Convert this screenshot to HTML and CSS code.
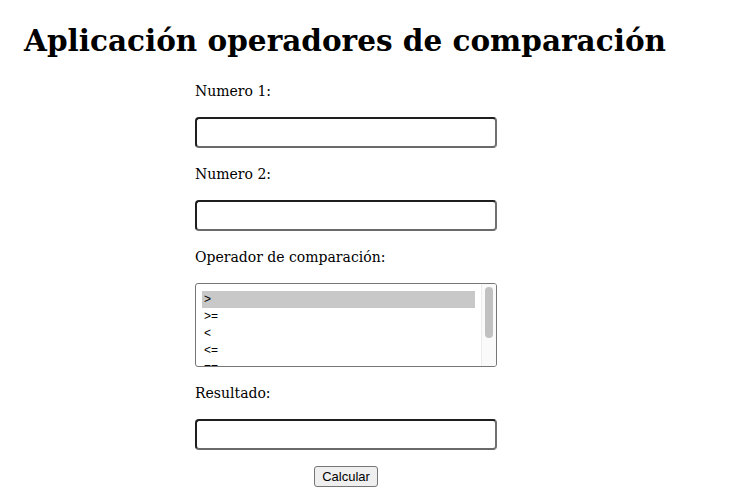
FILE: index.html
```html
<!DOCTYPE html>
<html lang="es">
<head>
<meta charset="utf-8">
<title>Operadores de comparación</title>
<link rel="stylesheet" href="styles.css">
</head>
<body>
<h1 class="title">Aplicación operadores de comparación</h1>
<form class="form">
  <label class="label" for="n1">Numero 1:</label>
  <input class="field" id="n1" type="text">
  <label class="label" for="n2">Numero 2:</label>
  <input class="field" id="n2" type="text">
  <label class="label">Operador de comparación:</label>
  <div class="listbox">
    <ul class="options">
      <li class="option selected">&gt;</li>
      <li class="option">&gt;=</li>
      <li class="option">&lt;</li>
      <li class="option">&lt;=</li>
      <li class="option">==</li>
    </ul>
    <div class="scroll"><div class="thumb"></div></div>
  </div>
  <label class="label" for="res">Resultado:</label>
  <input class="field" id="res" type="text">
  <div class="actions"><button class="btn" type="button">Calcular</button></div>
</form>
</body>
</html>
```
FILE: styles.css
```css
html, body {
  margin: 0;
  padding: 0;
  background: #fff;
  color: #000;
}
body {
  font-family: "DejaVu Serif", Georgia, serif;
  padding: 23px 0 0 24px;
}
.title {
  margin: 0;
  font-family: "DejaVu Serif", Georgia, serif;
  font-weight: bold;
  font-size: 29.5px;
  line-height: 35px;
  white-space: nowrap;
}
.form {
  display: flex;
  flex-direction: column;
  gap: 16px;
  width: 302px;
  margin: 23px 0 0 171px;
}
.label {
  display: block;
  font-size: 14px;
  line-height: 20px;
  height: 20px;
}
.field {
  box-sizing: border-box;
  width: 302px;
  height: 31px;
  margin: 0;
  border: 2px solid;
  border-color: #1e1e1e #707070 #6a6a6a #1e1e1e;
  border-radius: 4px;
  background: #fff;
  padding: 0 4px;
}
.listbox {
  box-sizing: border-box;
  width: 302px;
  height: 84px;
  border: 1px solid #767676;
  border-radius: 3px;
  display: flex;
  overflow: hidden;
  background: #fff;
}
.options {
  list-style: none;
  margin: 0;
  padding: 7px 6px 0 6px;
  flex: 1;
  font-family: "Liberation Sans", Arial, sans-serif;
  font-size: 12px;
}
.option {
  height: 17px;
  line-height: 17px;
  padding-left: 2px;
}
.selected {
  background: #c8c8c8;
}
.scroll {
  box-sizing: border-box;
  width: 15px;
  border-left: 1px solid #ececec;
  background: #fafafa;
  padding: 3px 0 0 3px;
}
.thumb {
  width: 8px;
  height: 51px;
  border-radius: 4px;
  background: #c1c1c1;
}
.actions {
  display: flex;
  justify-content: center;
}
.btn {
  font-family: "Liberation Sans", Arial, sans-serif;
  font-size: 13px;
  height: 21px;
  padding: 0 7px;
  background: #efefef;
  border: 1px solid #767676;
  border-radius: 3px;
  color: #000;
}
```
